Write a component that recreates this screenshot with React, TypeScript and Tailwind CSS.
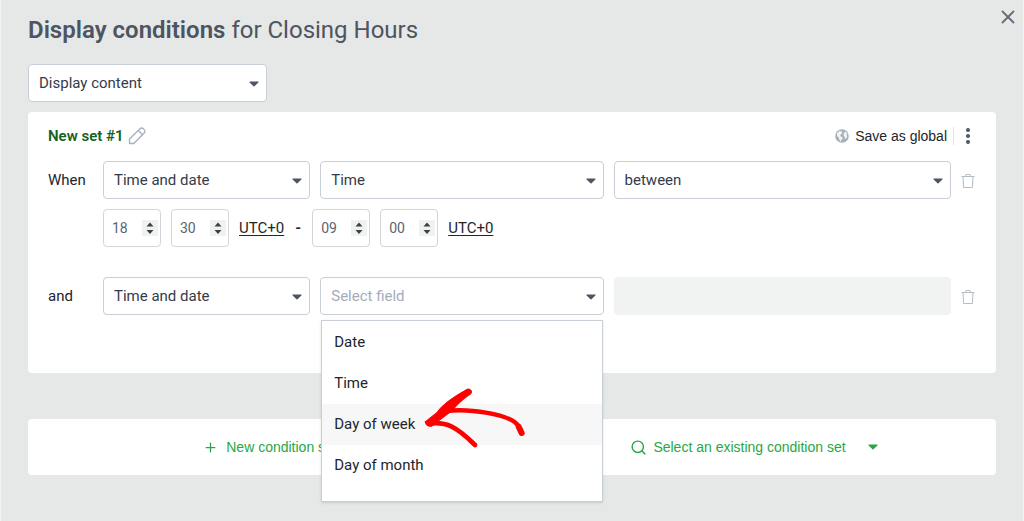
import React, { useState } from 'react';
import { Plus, Search, X } from 'lucide-react';

interface SelectFieldProps {
  label: string;
  options: string[];
  value: string;
  placeholder?: boolean;
  onChange: (value: string) => void;
}

const Caret = ({ className }: { className: string }) => (
  <svg width="10" height="6" viewBox="0 0 10 6" className={className} aria-hidden="true">
    <path d="M1 0.5h8c.6 0 .8.5.4.9L5.5 5.3c-.3.3-.7.3-1 0L.6 1.400C.2 1 .4.5 1 .5Z" fill="currentColor" />
  </svg>
);

const SelectField: React.FC<SelectFieldProps> = ({ label, options, value, placeholder, onChange }) => {
  return (
    <div className="relative w-full">
      <select
        aria-label={label}
        value={value}
        onChange={(e) => onChange(e.target.value)}
        className={`h-[38px] w-full appearance-none rounded border border-[#c8cfd6] bg-white pl-2.5 pr-7 text-[15px] outline-none ${
          placeholder ? 'text-[#a3adba]' : 'text-[#343b4a]'
        }`}
      >
        {options.map((option) => (
          <option key={option}>{option}</option>
        ))}
      </select>
      <Caret className="pointer-events-none absolute right-2 top-[17px] text-[#4d5462]" />
    </div>
  );
};

const NumberField = ({ label, initial }: { label: string; initial: string }) => {
  const [value, setValue] = useState(initial);

  return (
    <div className="relative">
      <input
        type="number"
        aria-label={label}
        value={value}
        onChange={(e) => setValue(e.target.value)}
        className="h-[38px] w-[58px] appearance-none rounded border border-[#d0d6db] bg-white pl-2 text-sm text-[#5b6473] outline-none [appearance:textfield] [&::-webkit-inner-spin-button]:appearance-none"
      />
      <svg width="16" height="16" viewBox="0 0 16 16" className="pointer-events-none absolute right-[3px] top-[11px]" aria-hidden="true">
        <path d="M0 0h16v16H0z" fill="#f0f2f2" />
        <path d="M8 2.500l3.500 4h-7zM8 14l-3.500-4h7z" fill="#3d3f42" />
      </svg>
    </div>
  );
};

const PencilIcon = () => (
  <svg width="18" height="18" viewBox="0 0 18 18" fill="none" stroke="#a6afbd" strokeWidth="1.3" strokeLinejoin="round" aria-hidden="true">
    <path d="M1.500 16.500V12L12 1.800c1-1 2.400-1 3.400 0l.8.800c1 1 1 2.400 0 3.400L5.800 16.500H1.500Z" />
    <path d="M10.300 3.500l4.200 4.200" />
  </svg>
);

const GlobeIcon = () => (
  <svg width="14" height="14" viewBox="0 0 14 14" aria-hidden="true">
    <circle cx="7" cy="7" r="6.800" fill="#a7b1bc" />
    <path d="M4.500 2l2 .3.800 1.500L6 5.200 5 7l2 1 .6 1.500L6 11.500l-.5 1.200-1-1.700L3.800 8.500 2 7 2 4ZM9 4l1.500-1.500 1.800 2-.8 1.500.8 1-.8 2-1.500 1-.6-2.500L8.500 6Z" fill="#fff" opacity=".85" />
  </svg>
);

const TrashButton = ({ label }: { label: string }) => (
  <button type="button" aria-label={label} className="flex justify-center pt-0.5 text-[#b3bbc6]">
    <svg width="14" height="16" viewBox="0 0 14 16" fill="none" stroke="currentColor" strokeLinejoin="round" aria-hidden="true">
      <path d="M.5 3.500h13M4.500 3.500l.5-2h4l.5 2M2 3.500l.6 11h8.800l.6-11" />
    </svg>
  </button>
);

// Hand drawn pointer next to the highlighted option
const HandArrow = () => (
  <svg width="103" height="61" viewBox="369 231 309 183" className="pointer-events-none absolute left-[101px] top-[66px]" fill="none" stroke="#fe0000" strokeLinecap="round" strokeLinejoin="round" aria-hidden="true">
    <path d="M386 341C440 334 470 350 525 405" strokeWidth="14" />
    <path d="M435 304C500 294 635 312 655 348" strokeWidth="13" />
    <path d="M656 350L665 369" strokeWidth="18" />
    <path d="M376 335L410 308Q432 276 501 238C510 234 519 244 513 251C485 270 470 286 455 303L414 334 395 349Q376 350 376 335Z" fill="#fe0000" strokeWidth="3" />
  </svg>
);

const fields = ['Date', 'Time', 'Day of week', 'Day of month'];

const App = () => {
  const [mode, setMode] = useState('Display content');
  const [field, setField] = useState('Time');
  const [nextField, setNextField] = useState('Select field');
  const [operator, setOperator] = useState('between');
  const [source, setSource] = useState('Time and date');
  const [nextSource, setNextSource] = useState('Time and date');

  return (
    <main className="relative min-h-screen border-x border-[#f2f4f4] bg-[#e5e8e7] px-[27px] pt-4 pb-[46px] font-['Roboto',sans-serif] text-[15px] text-[#22262b]">
      <button type="button" aria-label="Close" className="absolute right-1 top-1.5 text-[#666d79]">
        <X size={22} strokeWidth={2} />
      </button>

      <h1 className="text-2xl leading-7 text-[#4d5462]">
        <strong className="font-semibold">Display conditions</strong> for Closing Hours
      </h1>

      <div className="mt-5 w-[239px]">
        <SelectField label="Mode" options={['Display content', 'Hide content']} value={mode} onChange={setMode} />
      </div>

      <section className="mt-2.5 rounded bg-white px-5 pt-3.5 pb-[58px]">
        <div className="mb-[15px] flex h-5 items-center justify-between">
          <div className="flex items-center gap-1">
            <h2 className="text-[15px] font-semibold text-[#13601f]">New set #1</h2>
            <button type="button" aria-label="Rename set">
              <PencilIcon />
            </button>
          </div>
          <div className="flex items-center">
            <button type="button" className="flex items-center gap-1.5 font-['Liberation_Sans',sans-serif] text-sm">
              <GlobeIcon />
              Save as global
            </button>
            <button type="button" aria-label="More options" className="ml-1.5 border-l border-[#e3e6e8] pl-3 pr-1.5 text-[#4d5462]">
              <svg width="4" height="18" viewBox="0 0 4 18" fill="currentColor" aria-hidden="true">
                <circle cx="2" cy="3" r="2" />
                <circle cx="2" cy="9" r="2" />
                <circle cx="2" cy="15" r="2" />
              </svg>
            </button>
          </div>
        </div>

        <div className="grid grid-cols-[45px_207fr_283fr_337fr_15px] items-center gap-2.5">
          <span>When</span>
          <SelectField label="Source" options={['Time and date']} value={source} onChange={setSource} />
          <SelectField label="Field" options={fields} value={field} onChange={setField} />
          <SelectField label="Operator" options={['between', 'not between']} value={operator} onChange={setOperator} />
          <TrashButton label="Remove first condition" />

          <div className="col-span-3 col-start-2 flex items-center gap-2.5">
            <NumberField label="Start hour" initial="18" />
            <NumberField label="Start minute" initial="30" />
            <a href="#start-zone" className="underline underline-offset-2">UTC+0</a>
            <span className="w-2 text-center font-bold">-</span>
            <NumberField label="End hour" initial="09" />
            <NumberField label="End minute" initial="00" />
            <a href="#end-zone" className="underline underline-offset-2">UTC+0</a>
          </div>
        </div>

        <div className="mt-[30px] grid grid-cols-[45px_207fr_283fr_337fr_15px] items-center gap-2.5">
          <span>and</span>
          <SelectField label="Second source" options={['Time and date']} value={nextSource} onChange={setNextSource} />
          <div className="relative">
            <SelectField
              label="Second field"
              options={['Select field', ...fields]}
              value={nextField}
              placeholder={nextField === 'Select field'}
              onChange={setNextField}
            />
            <div className="absolute inset-x-px top-[43px] z-10 border border-[#c8cfd6] bg-white pt-px pb-[15px] shadow-sm">
              {fields.map((name) => (
                <button
                  key={name}
                  type="button"
                  onClick={() => setNextField(name)}
                  className={`block h-[41px] w-full px-3 text-left ${name === 'Day of week' ? 'bg-[#f7f7f7]' : ''}`}
                >
                  {name}
                </button>
              ))}
              <HandArrow />
            </div>
          </div>
          <div className="h-[38px] rounded bg-[#f1f3f3]" />
          <TrashButton label="Remove second condition" />
        </div>
      </section>

      <section className="mt-[46px] grid h-14 grid-cols-2 rounded bg-white font-['Liberation_Sans',sans-serif] text-sm text-[#28a745]">
        <button type="button" className="flex items-center justify-center gap-2">
          <Plus size={15} strokeWidth={2} />
          New condition set
        </button>
        <button type="button" className="flex items-center justify-center gap-1.5">
          <Search size={17} strokeWidth={2} />
          Select an existing condition set
          <Caret className="ml-4" />
        </button>
      </section>
    </main>
  );
};

export default App;
